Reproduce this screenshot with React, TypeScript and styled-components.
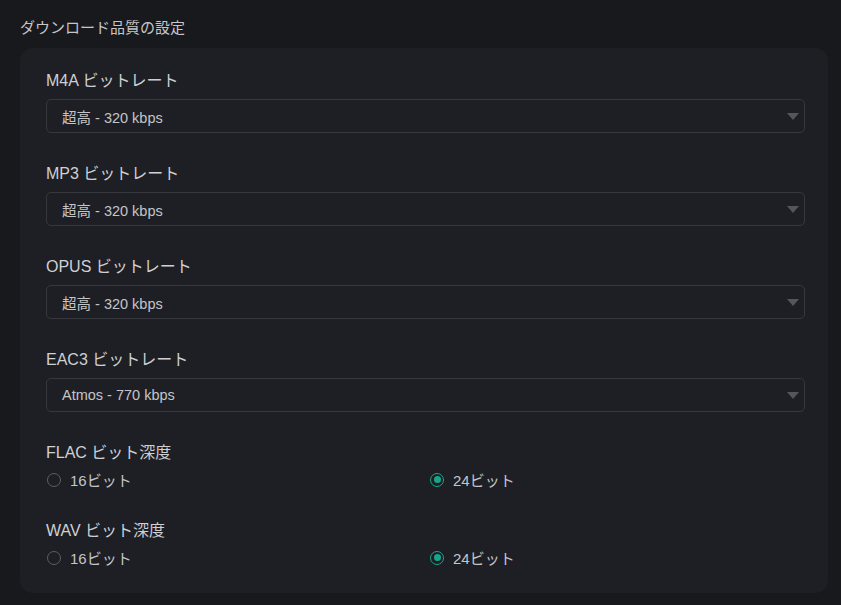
import React from 'react';
import styled, { createGlobalStyle } from 'styled-components';

const GlobalStyle = createGlobalStyle`
  html, body {
    margin: 0;
    padding: 0;
    background-color: #18191d;
  }
  body {
    font-family: "Liberation Sans", "Noto Sans CJK JP", sans-serif;
  }
`;

const Page = styled.div`
  width: 841px;
  height: 605px;
  padding: 18px 13px 0 20px;
  box-sizing: border-box;
  overflow: hidden;
`;

const Heading = styled.div`
  font-size: 15px;
  line-height: 20px;
  color: #c5c6c9;
  margin-bottom: 10px;
`;

const Card = styled.div`
  background-color: #1e1f24;
  border-radius: 13px;
  padding: 22px 23px 25px 26px;
  display: flex;
  flex-direction: column;
`;

const Section = styled.div<{ $last?: boolean }>`
  display: flex;
  flex-direction: column;
  margin-bottom: ${(p) => (p.$last ? '0' : '30px')};
`;

const Label = styled.div<{ $gap: number }>`
  font-size: 16px;
  line-height: 22px;
  color: #cfd0d3;
  margin-bottom: ${(p) => p.$gap}px;
`;

const SelectBox = styled.div`
  position: relative;
  height: 34px;
  box-sizing: border-box;
  border: 1px solid #37383d;
  border-radius: 5px;
  display: flex;
  align-items: center;
  padding-left: 15px;
  font-size: 14.5px;
  color: #c4c5c8;
`;

const Arrow = styled.span`
  position: absolute;
  right: 5px;
  top: 50%;
  margin-top: -3px;
  width: 0;
  height: 0;
  border-left: 6px solid transparent;
  border-right: 6px solid transparent;
  border-top: 7px solid #55565b;
`;

const RadioRow = styled.div`
  display: grid;
  grid-template-columns: 383px 1fr;
  height: 21px;
  align-items: center;
`;

const RadioOption = styled.label`
  display: flex;
  align-items: center;
  gap: 9px;
  font-size: 15px;
  color: #c4c5c8;
  padding-left: 1px;
`;

const RadioDot = styled.span<{ $checked?: boolean }>`
  width: 14px;
  height: 14px;
  box-sizing: border-box;
  border-radius: 50%;
  border: 1.5px solid ${(p) => (p.$checked ? '#1aa58a' : '#5c5d62')};
  display: flex;
  align-items: center;
  justify-content: center;

  &::after {
    content: '';
    display: ${(p) => (p.$checked ? 'block' : 'none')};
    width: 7px;
    height: 7px;
    border-radius: 50%;
    background-color: #1aa58a;
  }
`;

const selects = [
  { label: 'M4A ビットレート', value: '超高 - 320 kbps' },
  { label: 'MP3 ビットレート', value: '超高 - 320 kbps' },
  { label: 'OPUS ビットレート', value: '超高 - 320 kbps' },
  { label: 'EAC3 ビットレート', value: 'Atmos - 770 kbps' },
];

const radios = [
  { label: 'FLAC ビット深度', selected: 24 },
  { label: 'WAV ビット深度', selected: 24 },
];

const App = () => {
  return (
    <>
      <GlobalStyle />
      <Page>
        <Heading>ダウンロード品質の設定</Heading>
        <Card>
          {selects.map((s) => (
            <Section key={s.label}>
              <Label $gap={7}>{s.label}</Label>
              <SelectBox>
                {s.value}
                <Arrow />
              </SelectBox>
            </Section>
          ))}
          {radios.map((r, i) => (
            <Section key={r.label} $last={i === radios.length - 1}>
              <Label $gap={5}>{r.label}</Label>
              <RadioRow>
                {[16, 24].map((bits) => (
                  <RadioOption key={bits}>
                    <RadioDot $checked={bits === r.selected} />
                    {bits}ビット
                  </RadioOption>
                ))}
              </RadioRow>
            </Section>
          ))}
        </Card>
      </Page>
    </>
  );
};

export default App;
